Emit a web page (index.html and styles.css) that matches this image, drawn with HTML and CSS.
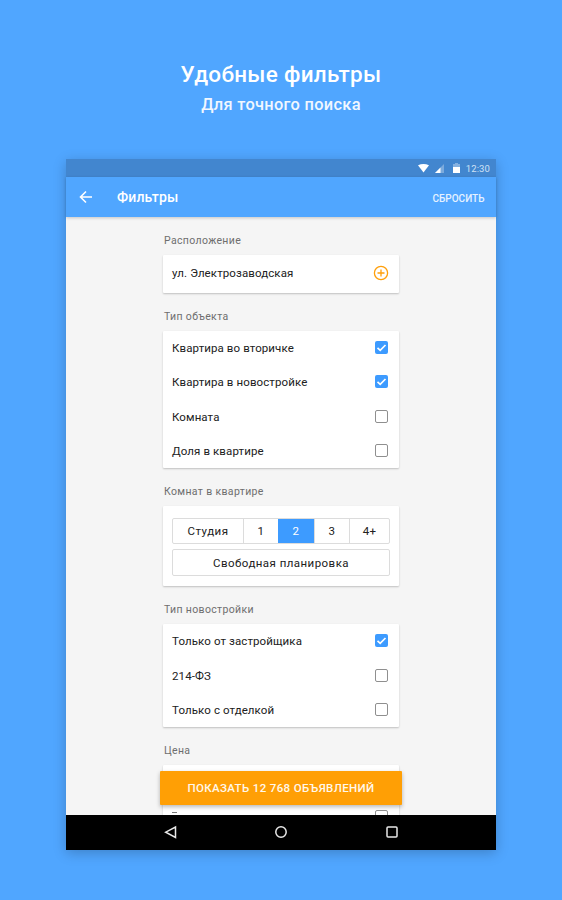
FILE: index.html
```html
<!DOCTYPE html>
<html lang="ru">
<head>
<meta charset="utf-8">
<title>Фильтры</title>
<link rel="stylesheet" href="styles.css">
</head>
<body>
<header class="promo">
  <h1 class="promo-title">Удобные фильтры</h1>
  <p class="promo-sub">Для точного поиска</p>
</header>
<main class="device">
  <div class="status">
    <svg class="st-wifi" width="11" height="9" viewBox="0 0 11 9"><path d="M0 1.2Q5.500-1.200 11 1.200L5.500 8.500Z" fill="#fff"/></svg>
    <svg class="st-signal" width="9" height="9" viewBox="0 0 9 9"><path d="M0 9L9 0V9Z" fill="#fff" opacity=".3"/><path d="M0 9L5.500 3.500V9Z" fill="#fff"/></svg>
    <svg class="st-batt" width="7" height="10" viewBox="0 0 7 10"><path d="M2 0H5V1H7V10H0V1H2Z" fill="#fff" opacity=".35"/><path d="M0 4H7V10H0Z" fill="#fff"/></svg>
    <span class="st-time">12:30</span>
  </div>
  <div class="toolbar">
    <svg class="back" width="14" height="14" viewBox="0 0 14 14"><path d="M13 7H2M7 1.500L1.500 7L7 12.500" fill="none" stroke="#fff" stroke-width="1.600"/></svg>
    <span class="tb-title">Фильтры</span>
    <span class="tb-action">СБРОСИТЬ</span>
  </div>
  <div class="content">
    <div class="column">
      <h2 class="label">Расположение</h2>
      <section class="card">
        <div class="row row-loc"><span>ул. Электрозаводская</span>
          <svg class="plus" width="16" height="16" viewBox="0 0 16 16"><circle cx="8" cy="8" r="6.600" fill="none" stroke="#ff9f0a" stroke-width="1.300"/><path d="M8 4.500V11.500M4.500 8H11.500" stroke="#ff9f0a" stroke-width="1.300"/></svg>
        </div>
      </section>
      <h2 class="label">Тип объекта</h2>
      <section class="card">
        <div class="row"><span>Квартира во вторичке</span><span class="cb on"><svg width="13" height="13" viewBox="0 0 13 13"><path d="M2.500 6.800L5.200 9.300L10.500 4" fill="none" stroke="#fff" stroke-width="1.700"/></svg></span></div>
        <div class="row"><span>Квартира в новостройке</span><span class="cb on"><svg width="13" height="13" viewBox="0 0 13 13"><path d="M2.500 6.800L5.200 9.300L10.500 4" fill="none" stroke="#fff" stroke-width="1.700"/></svg></span></div>
        <div class="row"><span>Комната</span><span class="cb"></span></div>
        <div class="row"><span>Доля в квартире</span><span class="cb"></span></div>
      </section>
      <h2 class="label">Комнат в квартире</h2>
      <section class="card card-rooms">
        <div class="seg">
          <span class="seg-item seg-studio">Студия</span>
          <span class="seg-item">1</span>
          <span class="seg-item active">2</span>
          <span class="seg-item">3</span>
          <span class="seg-item">4+</span>
        </div>
        <div class="free">Свободная планировка</div>
      </section>
      <h2 class="label">Тип новостройки</h2>
      <section class="card">
        <div class="row"><span>Только от застройщика</span><span class="cb on"><svg width="13" height="13" viewBox="0 0 13 13"><path d="M2.500 6.800L5.200 9.300L10.500 4" fill="none" stroke="#fff" stroke-width="1.700"/></svg></span></div>
        <div class="row"><span>214-ФЗ</span><span class="cb"></span></div>
        <div class="row"><span>Только с отделкой</span><span class="cb"></span></div>
      </section>
      <h2 class="label">Цена</h2>
      <section class="card">
        <div class="row"></div>
        <div class="row"><span class="peek"></span><span class="cb"></span></div>
      </section>
    </div>
    <div class="cta">ПОКАЗАТЬ 12 768 ОБЪЯВЛЕНИЙ</div>
  </div>
  <div class="navbar">
    <svg width="14" height="14" viewBox="0 0 14 14"><path d="M12.500 2V12.500L2.700 7.200Z" fill="none" stroke="#e8e8e8" stroke-width="1.500"/></svg>
    <svg width="14" height="14" viewBox="0 0 14 14"><circle cx="7" cy="7" r="5.200" fill="none" stroke="#e8e8e8" stroke-width="1.500"/></svg>
    <svg width="14" height="14" viewBox="0 0 14 14"><rect x="2" y="2" width="10" height="10" rx="1" fill="none" stroke="#e8e8e8" stroke-width="1.500"/></svg>
  </div>
</main>
</body>
</html>
```
FILE: styles.css
```css
* { box-sizing: border-box; }
html, body { margin: 0; height: 900px; overflow: hidden; }
body { background: #50a6ff; font-family: Roboto, "Noto Sans", sans-serif; color: #212121; }
.promo { height: 159px; padding-top: 61px; text-align: center; color: #fff; }
.promo-title { margin: 0; font-size: 22.500px; line-height: 26px; font-weight: 500; letter-spacing: .3px; }
.promo-sub { margin: 8px 0 0; font-size: 16.400px; line-height: 20px; font-weight: 500; letter-spacing: .3px; color: #f0f7ff; }
.device { width: 430px; height: 691px; margin-left: 66px; display: flex; flex-direction: column; box-shadow: 0 3px 12px rgba(0,0,0,.22); }
.status { height: 18px; flex: none; background: #4286cf; display: flex; align-items: center; justify-content: flex-end; padding-right: 6px; }
.st-wifi { margin-right: 6px; }
.st-signal { margin-right: 9px; }
.st-batt { margin-right: 6px; }
.st-time { font-size: 9.500px; color: #cfe2f6; letter-spacing: .1px; }
.toolbar { height: 40px; flex: none; background: #50a6ff; display: flex; align-items: center; padding: 0 11.500px 0 13px; color: #fff; box-shadow: 0 1px 3px rgba(0,0,0,.2); position: relative; z-index: 1; }
.tb-title { margin-left: 24px; font-size: 14px; font-weight: 500; letter-spacing: .15px; flex: 1; }
.tb-action { font-size: 10px; font-weight: 500; color: #e6f2ff; margin-top: 2px; }
.content { flex: 1; min-height: 0; background: #f5f5f5; position: relative; overflow: hidden; }
.column { width: 236px; margin-left: 97px; padding-top: 16px; }
.label { margin: 0; height: 15px; padding-left: 1px; font-size: 10.500px; line-height: 15px; font-weight: 400; color: #6e6e6e; letter-spacing: .35px; }
.card { background: #fff; margin: 7px 0 16px; box-shadow: 0 1px 2px rgba(0,0,0,.22); border-radius: 1px; }
.row { height: 34.300px; display: flex; align-items: center; justify-content: space-between; padding: 0 11px 0 9px; font-size: 11.500px; letter-spacing: .1px; }
.row-loc { height: 38px; padding: 0 10px 2px 9px; }
.cb { width: 13px; height: 13px; border: 1.500px solid #8f8f8f; border-radius: 2px; display: block; margin-bottom: 1px; }
.cb.on { background: #3d9bff; border: 0; }
.cb svg { display: block; }
.peek { width: 5px; height: 1px; margin: -8px 0 0 0; background: #777; }
.card-rooms { height: 80px; padding: 12px 9px 0; }
.seg { display: flex; height: 26px; border: 1px solid #dcdcdc; border-radius: 2px; }
.seg-item { flex: 0 0 35px; display: flex; align-items: center; justify-content: center; font-size: 11.500px; letter-spacing: .3px; border-left: 1px solid #dcdcdc; }
.seg-item:last-child { flex: 1; }
.seg-studio { flex: 0 0 70px; border-left: 0; letter-spacing: .45px; }
.seg-item.active { background: #3d9bff; color: #fff; border-left: 0; flex-basis: 36px; }
.free { height: 27px; margin-top: 5px; border: 1px solid #dcdcdc; border-radius: 2px; display: flex; align-items: center; justify-content: center; font-size: 11.500px; letter-spacing: .45px; }
.cta { position: absolute; left: 94px; top: 554px; width: 242px; height: 34px; background: #ff9f05; color: #fff8ec; border-radius: 1px; box-shadow: 0 2px 4px rgba(0,0,0,.28); display: flex; align-items: center; justify-content: center; font-size: 11.500px; font-weight: 500; letter-spacing: .35px; padding-bottom: 1px; }
.navbar { height: 35px; flex: none; background: #000; display: flex; align-items: center; position: relative; padding: 0 0 2px 97px; gap: 97px; }
```
